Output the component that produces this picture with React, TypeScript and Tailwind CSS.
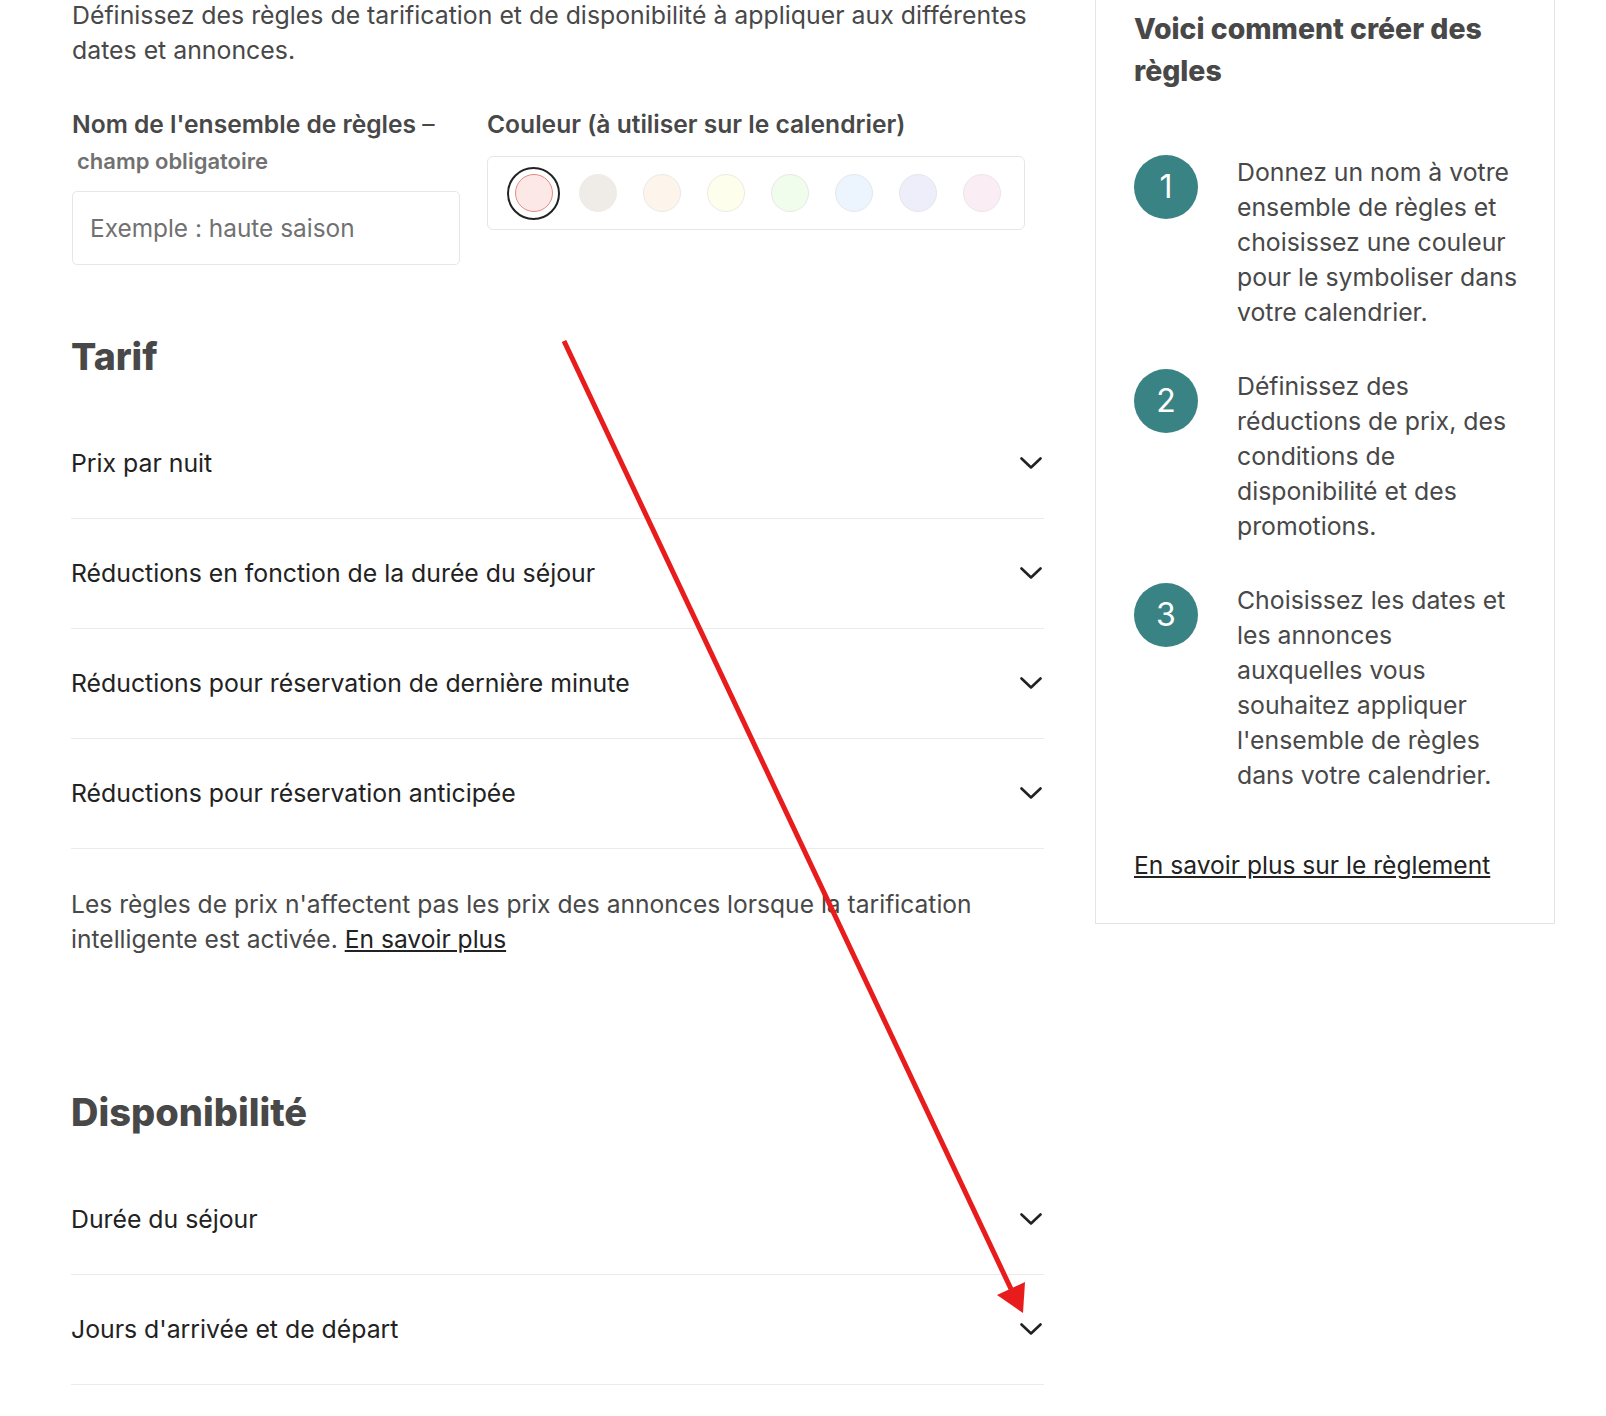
import React from 'react';

const swatches = [
  { fill: 'bg-[#fce8e6]', border: 'border-[#e58a80]', selected: true },
  { fill: 'bg-[#efebe7]', border: 'border-[#efebe7]' },
  { fill: 'bg-[#fdf5ec]', border: 'border-[#ebe9e6]' },
  { fill: 'bg-[#fefeec]', border: 'border-[#ebebe4]' },
  { fill: 'bg-[#f1fdec]', border: 'border-[#e6e9e4]' },
  { fill: 'bg-[#ecf5fd]', border: 'border-[#e5e8eb]' },
  { fill: 'bg-[#eeeefb]', border: 'border-[#e6e6ea]' },
  { fill: 'bg-[#fbedf4]', border: 'border-[#ebe6e8]' },
];

const pricingRows = [
  'Prix par nuit',
  'Réductions en fonction de la durée du séjour',
  'Réductions pour réservation de dernière minute',
  'Réductions pour réservation anticipée',
];

const availabilityRows = ['Durée du séjour', "Jours d'arrivée et de départ"];

const steps = [
  {
    n: '1',
    lines: [
      'Donnez un nom à votre',
      'ensemble de règles et',
      'choisissez une couleur',
      'pour le symboliser dans',
      'votre calendrier.',
    ],
  },
  {
    n: '2',
    lines: [
      'Définissez des',
      'réductions de prix, des',
      'conditions de',
      'disponibilité et des',
      'promotions.',
    ],
  },
  {
    n: '3',
    lines: [
      'Choisissez les dates et',
      'les annonces',
      'auxquelles vous',
      'souhaitez appliquer',
      "l'ensemble de règles",
      'dans votre calendrier.',
    ],
  },
];

const Chevron = () => (
  <svg width="22" height="13" viewBox="0 0 22 13" fill="none" className="shrink-0 mr-[2px]">
    <path d="M1.5 1.5 L11 10.5 L20.5 1.5" stroke="#222222" strokeWidth="2.6" strokeLinecap="round" strokeLinejoin="round" />
  </svg>
);

const AccordionRow: React.FC<{ label: string }> = ({ label }) => (
  <div className="flex items-center justify-between py-[37px] border-b border-[#ebebeb]">
    <span className="text-[24.8px] leading-[35px] text-[#222222] whitespace-nowrap">{label}</span>
    <Chevron />
  </div>
);

export default function App() {
  return (
    <div
      className="relative w-[1606px] h-[1416px] overflow-hidden bg-white"
      style={{ fontFamily: 'Inter, "Noto Sans", sans-serif' }}
    >
      <div className="flex pl-[71px]">
        {/* main column */}
        <div className="w-[973px] shrink-0">
          <p className="pl-[1px] -mt-[2px] text-[24.85px] leading-[35px] text-[#484848] whitespace-nowrap">
            Définissez des règles de tarification et de disponibilité à appliquer aux différentes
            <br />
            dates et annonces.
          </p>

          <div className="mt-[40px] flex gap-[27px] pl-[1px]">
            <div className="w-[388px] shrink-0">
              <div className="text-[24.6px] leading-[32px] font-semibold text-[#484848] whitespace-nowrap">
                Nom de l'ensemble de règles <span className="font-normal">–</span>
              </div>
              <div className="mt-[8px] pl-[5px] text-[22px] leading-[26px] font-semibold text-[#717171]">
                champ obligatoire
              </div>
              <div className="mt-[17px] h-[74px] border border-[#e6e6e6] rounded-[5px] flex items-center pl-[17px]">
                <span className="text-[24.4px] text-[#717171]">Exemple : haute saison</span>
              </div>
            </div>
            <div className="w-[538px] shrink-0">
              <div className="text-[24.6px] leading-[32px] font-semibold text-[#484848] whitespace-nowrap">
                Couleur (à utiliser sur le calendrier)
              </div>
              <div className="mt-[16px] h-[74px] border border-[#e6e6e6] rounded-[6px] flex items-center pl-[19px] gap-[11px]">
                {swatches.map((s, i) => (
                  <div
                    key={i}
                    className={`w-[53px] h-[53px] rounded-full flex items-center justify-center ${
                      s.selected ? 'border-2 border-[#222222]' : ''
                    }`}
                  >
                    <div className={`w-[38px] h-[38px] rounded-full border ${s.fill} ${s.border}`} />
                  </div>
                ))}
              </div>
            </div>
          </div>

          <h2 className="mt-[69px] text-[37.5px] leading-[46px] font-extrabold text-[#484848]">Tarif</h2>
          <div className="mt-[29px]">
            {pricingRows.map((r) => (
              <AccordionRow key={r} label={r} />
            ))}
          </div>

          <p className="mt-[38px] text-[24.6px] leading-[35px] text-[#484848] whitespace-nowrap">
            Les règles de prix n'affectent pas les prix des annonces lorsque la tarification
            <br />
            intelligente est activée.{' '}
            <a href="#" className="underline text-[#222222]">
              En savoir plus
            </a>
          </p>

          <h2 className="mt-[132px] text-[38px] leading-[46px] font-extrabold text-[#484848]">Disponibilité</h2>
          <div className="mt-[30px]">
            {availabilityRows.map((r) => (
              <AccordionRow key={r} label={r} />
            ))}
          </div>
        </div>

        {/* sidebar */}
        <div className="ml-[51px] w-[460px] shrink-0 self-start border border-t-0 border-[#e4e4e4] pl-[38px] pr-[40px] pt-[8px] pb-[40px]">
          <h3 className="text-[28.4px] leading-[42px] font-extrabold text-[#484848] whitespace-nowrap">
            Voici comment créer des
            <br />
            règles
          </h3>
          <div className="mt-[63px] flex flex-col gap-[39px]">
            {steps.map((s) => (
              <div key={s.n} className="flex gap-[39px]">
                <div className="w-[64px] h-[64px] shrink-0 rounded-full bg-[#3a8384] flex items-center justify-center text-white text-[32px]">
                  {s.n}
                </div>
                <p className="text-[24.8px] leading-[35px] text-[#484848] whitespace-nowrap">
                  {s.lines.map((l, i) => (
                    <React.Fragment key={i}>
                      {l}
                      {i < s.lines.length - 1 && <br />}
                    </React.Fragment>
                  ))}
                </p>
              </div>
            ))}
          </div>
          <a href="#" className="block mt-[55px] text-[24.6px] leading-[35px] underline text-[#222222] whitespace-nowrap">
            En savoir plus sur le règlement
          </a>
        </div>
      </div>

      {/* red annotation arrow */}
      <svg className="absolute left-0 top-0 pointer-events-none" width="1606" height="1416">
        <line x1="564" y1="341" x2="1011" y2="1289" stroke="#e81c1c" strokeWidth="5" />
        <polygon points="997,1295 1025,1282 1023,1313" fill="#e81c1c" />
      </svg>
    </div>
  );
}
